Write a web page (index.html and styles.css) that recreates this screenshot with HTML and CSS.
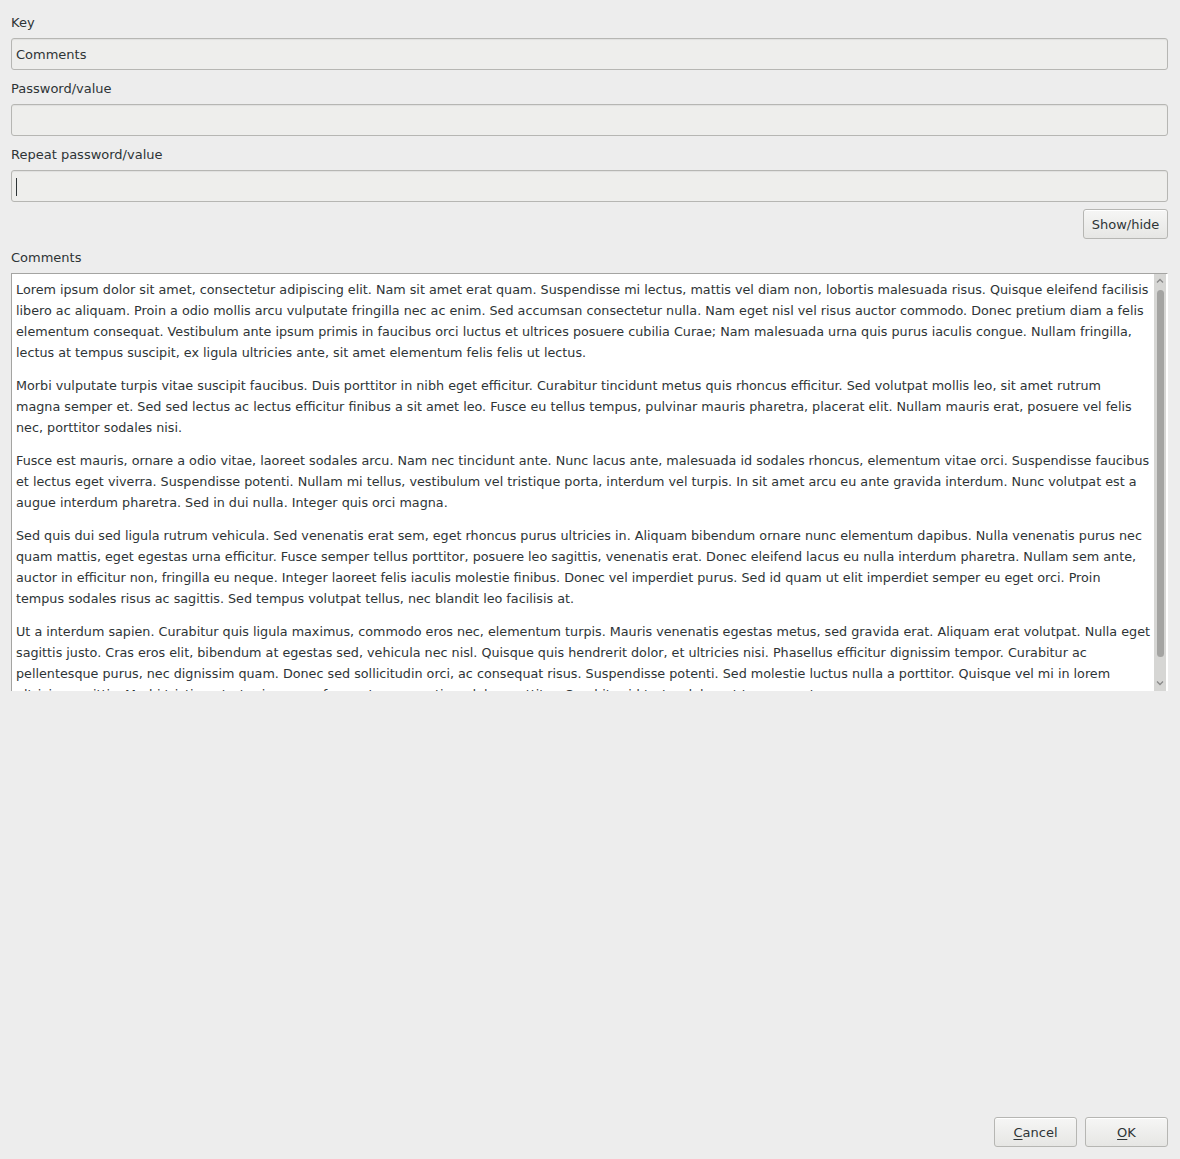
FILE: index.html
```html
<!DOCTYPE html>
<html>
<head>
<meta charset="utf-8">
<title>Edit entry</title>
<link rel="stylesheet" href="styles.css">
</head>
<body>
<div class="dialog">
  <div class="form">
    <label class="label first">Key</label>
    <div class="input"><span class="value">Comments</span></div>
    <label class="label">Password/value</label>
    <div class="input"></div>
    <label class="label">Repeat password/value</label>
    <div class="input"><span class="caret"></span></div>
    <div class="row-right">
      <button class="btn show">Show/hide</button>
    </div>
    <label class="label comments-label">Comments</label>
    <div class="textarea">
      <div class="text">
        <p>Lorem ipsum dolor sit amet, consectetur adipiscing elit. Nam sit amet erat quam. Suspendisse mi lectus, mattis vel diam non, lobortis malesuada risus. Quisque eleifend facilisis libero ac aliquam. Proin a odio mollis arcu vulputate fringilla nec ac enim. Sed accumsan consectetur nulla. Nam eget nisl vel risus auctor commodo. Donec pretium diam a felis elementum consequat. Vestibulum ante ipsum primis in faucibus orci luctus et ultrices posuere cubilia Curae; Nam malesuada urna quis purus iaculis congue. Nullam fringilla, lectus at tempus suscipit, ex ligula ultricies ante, sit amet elementum felis felis ut lectus.</p>
        <p>Morbi vulputate turpis vitae suscipit faucibus. Duis porttitor in nibh eget efficitur. Curabitur tincidunt metus quis rhoncus efficitur. Sed volutpat mollis leo, sit amet rutrum<br>magna semper et. Sed sed lectus ac lectus efficitur finibus a sit amet leo. Fusce eu tellus tempus, pulvinar mauris pharetra, placerat elit. Nullam mauris erat, posuere vel felis nec, porttitor sodales nisi.</p>
        <p>Fusce est mauris, ornare a odio vitae, laoreet sodales arcu. Nam nec tincidunt ante. Nunc lacus ante, malesuada id sodales rhoncus, elementum vitae orci. Suspendisse faucibus et lectus eget viverra. Suspendisse potenti. Nullam mi tellus, vestibulum vel tristique porta, interdum vel turpis. In sit amet arcu eu ante gravida interdum. Nunc volutpat est a augue interdum pharetra. Sed in dui nulla. Integer quis orci magna.</p>
        <p>Sed quis dui sed ligula rutrum vehicula. Sed venenatis erat sem, eget rhoncus purus ultricies in. Aliquam bibendum ornare nunc elementum dapibus. Nulla venenatis purus nec quam mattis, eget egestas urna efficitur. Fusce semper tellus porttitor, posuere leo sagittis, venenatis erat. Donec eleifend lacus eu nulla interdum pharetra. Nullam sem ante, auctor in efficitur non, fringilla eu neque. Integer laoreet felis iaculis molestie finibus. Donec vel imperdiet purus. Sed id quam ut elit imperdiet semper eu eget orci. Proin tempus sodales risus ac sagittis. Sed tempus volutpat tellus, nec blandit leo facilisis at.</p>
        <p>Ut a interdum sapien. Curabitur quis ligula maximus, commodo eros nec, elementum turpis. Mauris venenatis egestas metus, sed gravida erat. Aliquam erat volutpat. Nulla eget sagittis justo. Cras eros elit, bibendum at egestas sed, vehicula nec nisl. Quisque quis hendrerit dolor, et ultricies nisi. Phasellus efficitur dignissim tempor. Curabitur ac pellentesque purus, nec dignissim quam. Donec sed sollicitudin orci, ac consequat risus. Suspendisse potenti. Sed molestie luctus nulla a porttitor. Quisque vel mi in lorem ultricies sagittis. Morbi tristique tortor in massa fermentum, a pretium dolor porttitor. Curabitur id tortor dolor, ut tempus ante.</p>
      </div>
      <div class="scrollbar">
        <svg class="arrow" width="12" height="10" viewBox="0 0 12 10"><path d="M3 6.5 L6 3.5 L9 6.5" fill="none" stroke="#8a8a8a" stroke-width="1.3"/></svg>
        <div class="trough"><div class="thumb"></div></div>
        <svg class="arrow down" width="12" height="10" viewBox="0 0 12 10"><path d="M3 3.5 L6 6.5 L9 3.5" fill="none" stroke="#8a8a8a" stroke-width="1.3"/></svg>
      </div>
    </div>
  </div>
  <div class="footer">
    <button class="btn action"><u>C</u>ancel</button>
    <button class="btn action"><u>O</u>K</button>
  </div>
</div>
</body>
</html>
```

FILE: styles.css
```css
html, body {
  margin: 0;
  padding: 0;
  background: #ededed;
}
body {
  font-family: "DejaVu Sans", sans-serif;
  font-size: 13px;
  color: #2e3436;
}
.dialog {
  height: 1159px;
  box-sizing: border-box;
  padding: 0 12px 12px 11px;
  display: flex;
  flex-direction: column;
  justify-content: space-between;
}
.form {
  display: flex;
  flex-direction: column;
}
.label {
  display: block;
  line-height: 18px;
  padding: 10px 0 6px 0;
}
.label.first {
  padding-top: 14px;
}
.input {
  height: 32px;
  box-sizing: border-box;
  border: 1px solid #b6b6b3;
  border-radius: 3px;
  background: #eeeeec;
  box-shadow: inset 0 1px 1px rgba(0,0,0,0.06);
  display: flex;
  align-items: center;
  padding: 1px 0 0 4px;
}
.value {
  line-height: 18px;
}
.caret {
  display: block;
  width: 1px;
  height: 18px;
  background: #2e3436;
}
.row-right {
  display: flex;
  justify-content: flex-end;
  padding-top: 7px;
}
.btn {
  font-family: "DejaVu Sans", sans-serif;
  font-size: 13px;
  color: #2e3436;
  border: 1px solid #b6b6b3;
  border-radius: 3px;
  background: linear-gradient(#f6f6f5, #e6e6e4);
  box-shadow: inset 0 1px 0 #ffffff;
  height: 30px;
  box-sizing: border-box;
  padding: 0;
  margin: 0;
}
.btn.show {
  width: 85px;
}
.btn u {
  text-decoration-thickness: 1px;
  text-underline-offset: 2px;
}
.textarea {
  height: 418px;
  box-sizing: border-box;
  border: 1px solid #a4a4a2;
  border-bottom: none;
  border-right-color: #ffffff;
  background: #ffffff;
  display: flex;
  overflow: hidden;
}
.text {
  flex: 1;
  padding: 5px 4px 0 4px;
  font-size: 12.75px;
  line-height: 21px;
  overflow: hidden;
}
.text p {
  margin: 0 0 12px 0;
}
.scrollbar {
  width: 12px;
  flex: none;
  background: #d6d6d4;
  display: flex;
  flex-direction: column;
  align-items: center;
  margin-right: 1px;
}
.arrow {
  display: block;
  flex: none;
  margin-top: 2px;
}
.arrow.down {
  margin-top: 0;
  margin-bottom: 3px;
}
.trough {
  flex: 1;
  width: 100%;
  padding: 4px 0 21px 0;
  box-sizing: border-box;
  display: flex;
  justify-content: center;
}
.thumb {
  width: 7px;
  height: 100%;
  border-radius: 4px;
  background: #a4a4a2;
}
.footer {
  display: flex;
  justify-content: flex-end;
  gap: 8px;
}
.btn.action {
  width: 83px;
  padding-top: 1px;
}
```
